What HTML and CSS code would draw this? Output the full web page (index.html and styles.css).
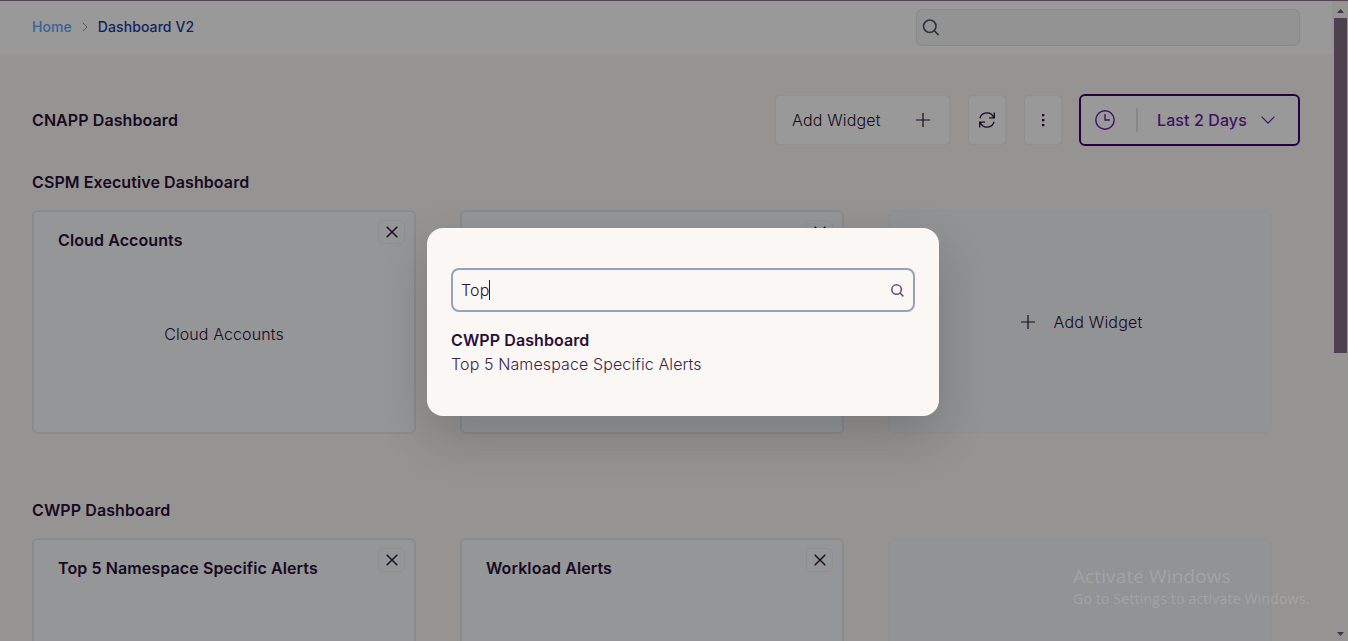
FILE: index.html
```html
<!DOCTYPE html>
<html lang="en">
<head>
<meta charset="utf-8">
<title>Dashboard V2</title>
<link rel="stylesheet" href="styles.css">
</head>
<body>
<svg class="symbols">
  <symbol id="plus" viewBox="0 0 16 16"><path d="M8 1v14M1 8h14"/></symbol>
  <symbol id="close" viewBox="0 0 12 12"><path d="M.7.7l10.6 10.6M11.3.7L.7 11.3"/></symbol>
  <symbol id="search" viewBox="0 0 18 18"><circle cx="7.7" cy="7.7" r="6.6"/><path d="M12.5 12.5l4.6 4.6"/></symbol>
</svg>
<div class="window">
  <div class="page">
    <header class="topbar">
      <nav class="crumbs">
        <a class="crumb-home">Home</a>
        <svg class="crumb-sep" viewBox="0 0 6 10"><path d="M1 1l4 4-4 4"/></svg>
        <a class="crumb-current">Dashboard V2</a>
      </nav>
      <div class="global-search"><svg class="icon-search"><use href="#search"/></svg></div>
    </header>
    <main class="content">
      <div class="toolbar">
        <h1 class="title">CNAPP Dashboard</h1>
        <div class="actions">
          <button class="btn btn-add"><span>Add Widget</span><svg class="icon-plus"><use href="#plus"/></svg></button>
          <button class="btn btn-icon">
            <svg class="icon-refresh" viewBox="0 0 18 18"><path d="M1.9 7.2a7.3 7.3 0 0 1 13.8-.6M16.3 1.6v5.2h-5.2M16.1 10.8a7.3 7.3 0 0 1-13.8.6M1.7 16.4v-5.2h5.2"/></svg>
          </button>
          <button class="btn btn-icon">
            <svg class="icon-dots" viewBox="0 0 4 14"><rect x="1" y="1" width="2.3" height="2.3"/><rect x="1" y="6" width="2.3" height="2.3"/><rect x="1" y="11" width="2.3" height="2.3"/></svg>
          </button>
          <button class="range">
            <svg class="icon-clock" viewBox="0 0 20 20"><circle cx="10" cy="10" r="9.2"/><path d="M10 4v6h4.8"/></svg>
            <span class="divider"></span>
            <span class="range-label">Last 2 Days</span>
            <svg class="icon-chevron" viewBox="0 0 14 8"><path d="M.6.6L7 7.1 13.4.6"/></svg>
          </button>
        </div>
      </div>
      <section class="group">
        <h2 class="title">CSPM Executive Dashboard</h2>
        <div class="cards">
          <article class="card">
            <div class="card-head"><h3>Cloud Accounts</h3><button class="close"><svg><use href="#close"/></svg></button></div>
            <div class="card-body">Cloud Accounts</div>
          </article>
          <article class="card">
            <div class="card-head"><h3></h3><button class="close"><svg><use href="#close"/></svg></button></div>
          </article>
          <article class="card card-add"><svg class="icon-plus"><use href="#plus"/></svg><span>Add Widget</span></article>
        </div>
      </section>
      <section class="group">
        <h2 class="title">CWPP Dashboard</h2>
        <div class="cards">
          <article class="card">
            <div class="card-head"><h3>Top 5 Namespace Specific Alerts</h3><button class="close"><svg><use href="#close"/></svg></button></div>
          </article>
          <article class="card">
            <div class="card-head"><h3>Workload Alerts</h3><button class="close"><svg><use href="#close"/></svg></button></div>
          </article>
          <article class="card card-add"></article>
        </div>
      </section>
    </main>
  </div>
  <div class="scrollbar">
    <svg class="arrow" viewBox="0 0 7 4"><path d="M0 4L3.5 0 7 4z"/></svg>
    <div class="track"><div class="thumb"></div></div>
    <svg class="arrow" viewBox="0 0 7 4"><path d="M0 0h7L3.5 4z"/></svg>
  </div>
</div>
<div class="backdrop">
  <div class="dialog">
    <div class="field"><span class="value">Top</span><span class="caret"></span><svg class="icon-find"><use href="#search"/></svg></div>
    <h4>CWPP Dashboard</h4>
    <p>Top 5 Namespace Specific Alerts</p>
  </div>
</div>
<div class="watermark">
  <div class="wm-title">Activate Windows</div>
  <div class="wm-text">Go to Settings to activate Windows.</div>
</div>
</body>
</html>
```
FILE: styles.css
```css
* { box-sizing: border-box; }
html, body { margin: 0; height: 641px; overflow: hidden; }
body { position: relative; font: 300 16px/24px Inter, sans-serif; letter-spacing: .11px; color: #2a0f38; }
h1, h2, h3, h4, p { margin: 0; }
button { font: inherit; letter-spacing: inherit; color: inherit; padding: 0; background: none; }
svg { display: block; flex: none; fill: none; stroke: currentColor; }
.symbols { position: absolute; width: 0; height: 0; }

.window { display: flex; height: 641px; background: #faf7f4; border-top: 1px solid #8a7488; }
.page { flex: 1; overflow: hidden; }
.topbar { display: flex; align-items: center; justify-content: space-between; height: 53px; padding: 0 32px; background: #fff; }
.crumbs { display: flex; align-items: center; padding-bottom: 2px; font-size: 14px; font-weight: 500; letter-spacing: .08px; }
.crumb-home { color: #60a5fa; }
.crumb-sep { width: 6px; height: 10px; margin: 0 10px; color: #999; }
.crumb-current { color: #1e3a9f; }
.global-search { width: 384px; height: 37px; padding: 9px 5px; background: #f5f5f5; border: 1px solid #e5e7eb; border-radius: 6px; }
.icon-search { width: 18px; height: 18px; padding-bottom: 1px; stroke-width: 1.7; color: #475569; }

.content { padding: 40px 32px 0; }
.toolbar { display: flex; align-items: center; justify-content: space-between; height: 52px; }
.title { font-size: 16px; font-weight: 600; line-height: 24px; letter-spacing: .09px; }
.actions { display: flex; align-items: center; }
.btn { display: flex; align-items: center; height: 50px; background: #fff; border: 1px solid #f3f0ed; border-radius: 5px; }
.btn-add { width: 175px; justify-content: space-between; padding: 0 18px 0 16px; letter-spacing: .18px; margin-right: 18px; }
.icon-plus { width: 16px; height: 16px; stroke-width: 1.2; }
.btn-icon { width: 38px; justify-content: center; margin-right: 18px; }
.btn-icon + .range { margin-left: -1px; }
.icon-refresh { width: 18px; height: 18px; stroke-width: 1.3; }
.icon-dots { width: 4px; height: 14px; fill: currentColor; stroke: none; }
.range { display: flex; align-items: center; width: 221px; height: 52px; padding: 0 14px; background: #fff; border: 2px solid #3f006b; border-radius: 6px; color: #6b21a8; }
.icon-clock { width: 20px; height: 20px; stroke-width: 1.4; }
.divider { width: 2px; height: 24px; margin: 0 19px 0 21px; background: #e2e2e4; }
.range-label { font-weight: 500; letter-spacing: .1px; white-space: nowrap; }
.icon-chevron { width: 14px; height: 8px; margin-left: 14px; stroke-width: 1.2; }

.group { height: 328px; padding-top: 24px; }
.cards { display: grid; grid-template-columns: repeat(3, 384px); gap: 44px; margin-top: 16px; }
.card { height: 224px; background: #f8fafc; border: 2px solid #e5e8eb; border-radius: 6px; }
.card-head { display: flex; justify-content: space-between; padding: 8px 9px 0 24px; }
.card-head h3 { padding-top: 8px; font-size: 16px; font-weight: 600; line-height: 24px; letter-spacing: .1px; white-space: nowrap; }
.close { display: flex; align-items: center; justify-content: center; width: 27px; height: 24px; border: 1px solid #eff0f1; border-radius: 5px; }
.close svg { width: 12px; height: 12px; stroke-width: 1.4; }
.card-body { margin-top: 70px; text-align: center; }
.card-add { display: flex; align-items: center; justify-content: center; gap: 18px; padding-left: 2px; background: #f3f5f7; border-color: #f0f2f5; letter-spacing: .2px; }

.scrollbar { display: flex; flex-direction: column; align-items: center; width: 16px; padding: 8px 0 5px; background: #faf7f4; color: #6f5877; }
.arrow { width: 7px; height: 4px; fill: currentColor; stroke: none; }
.track { flex: 1; padding-top: 5px; }
.thumb { width: 13px; height: 335px; background: #806c84; }

.backdrop { position: absolute; inset: 0; padding: 228px 0 0 427px; background: rgba(0, 0, 0, .4); }
.dialog { width: 512px; height: 188px; padding: 40px 24px; background: #fbf7f4; border-radius: 16px; box-shadow: 0 20px 50px rgba(15, 18, 26, .2); }
.field { display: flex; align-items: center; height: 44px; margin-bottom: 16px; padding: 0 9px 0 8px; border: 2px solid #94a3b8; border-radius: 8px; }
.caret { width: 1px; height: 20px; background: #2a0f38; }
.icon-find { width: 13px; height: 13px; margin-left: auto; stroke-width: 2.2; color: #6b5078; }
.dialog h4 { font-size: 16px; font-weight: 600; letter-spacing: .09px; }
.dialog p { color: #3b2349; }

.watermark { position: absolute; left: 1073px; top: 564px; font-family: "Open Sans", sans-serif; font-weight: 400; color: rgba(255, 255, 255, .17); white-space: nowrap; }
.wm-title { font-size: 19px; line-height: 24px; }
.wm-text { font-size: 14px; line-height: 21px; letter-spacing: .2px; }
```
